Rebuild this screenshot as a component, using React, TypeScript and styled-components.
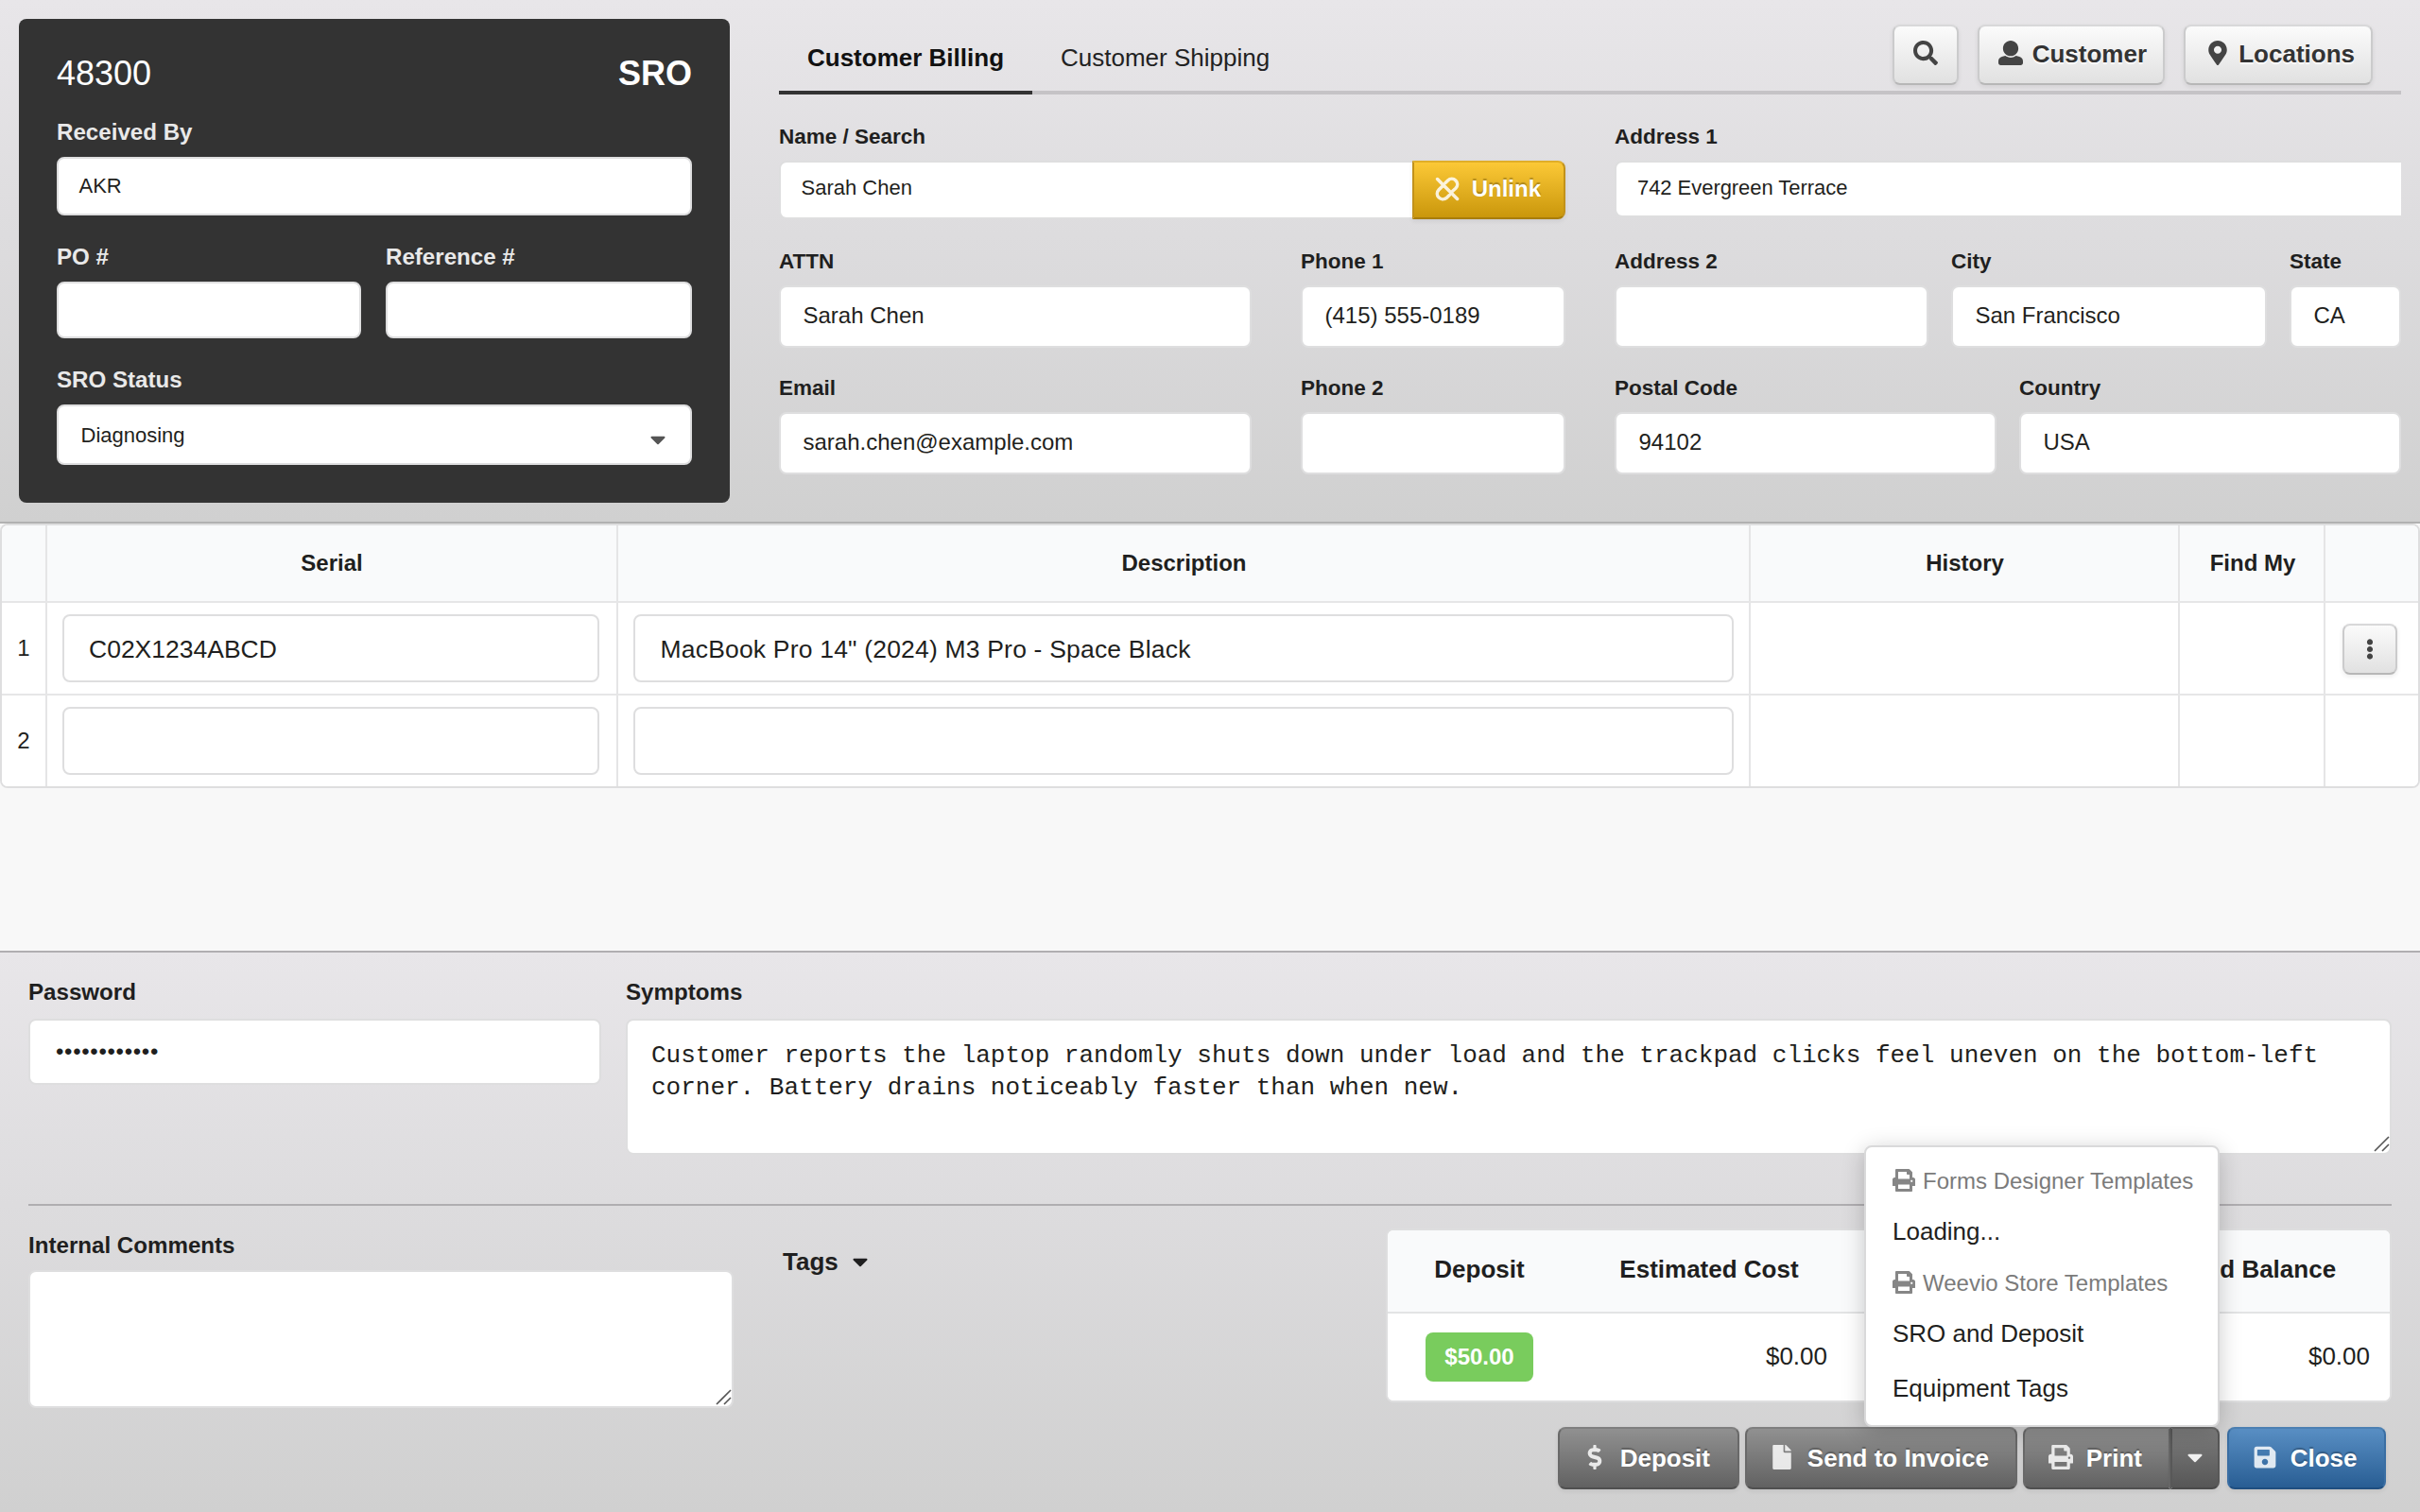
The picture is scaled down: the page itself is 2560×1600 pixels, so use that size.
import React from 'react';
import styled, { createGlobalStyle, css } from 'styled-components';
import {
  FaCaretDown,
  FaDollarSign,
  FaEllipsisV,
  FaFile,
  FaMapMarkerAlt,
  FaSave,
  FaSearch,
} from 'react-icons/fa';

const sans = `'Liberation Sans', Arial, Helvetica, sans-serif`;
const mono = `'Liberation Mono', 'Courier New', monospace`;
const line = '#dededf';
const ink = '#1f1f20';

const GlobalStyle = createGlobalStyle`
  *, *::before, *::after { box-sizing: border-box; }
  body {
    margin: 0;
    font-family: ${sans};
    color: ${ink};
    background: #f8f8f8;
  }
  svg { display: block; }
`;

const Page = styled.div`
  width: 2560px;
  height: 1600px;
  display: flex;
  flex-direction: column;
  overflow: hidden;
  background: #f8f8f8;
`;

/* ---------- shared form parts ---------- */

const FieldBox = styled.div<{ $grow?: number; $width?: number }>`
  display: flex;
  flex-direction: column;
  min-width: 0;
  ${(p) => (p.$width ? `flex: 0 0 ${p.$width}px;` : `flex: ${p.$grow ?? 1} 1 0;`)}
`;

const Label = styled.label<{ $size?: number; $light?: boolean; $gap?: number }>`
  font-size: ${(p) => p.$size ?? 24.14}px;
  line-height: 28px;
  font-weight: 700;
  white-space: nowrap;
  color: ${(p) => (p.$light ? '#e9e9e9' : ink)};
  margin-bottom: ${(p) => p.$gap ?? 12}px;
`;

const Input = styled.div<{
  $h: number;
  $size?: number;
  $pad?: number;
  $lift?: number;
  $sink?: number;
  $track?: number;
  $joined?: boolean;
}>`
  display: flex;
  align-items: center;
  flex: 1 1 auto;
  height: ${(p) => p.$h}px;
  max-height: ${(p) => p.$h}px;
  padding: ${(p) => p.$sink ?? 0}px ${(p) => p.$pad ?? 20}px ${(p) => p.$lift ?? 0}px;
  border: 2px solid ${line};
  border-radius: 8px;
  background: #fff;
  font-size: ${(p) => p.$size ?? 24}px;
  letter-spacing: ${(p) => p.$track ?? 0}px;
  white-space: nowrap;
  ${(p) =>
    p.$joined &&
    css`
      border-right: 0;
      border-radius: 8px 0 0 8px;
    `}
`;

const Row = styled.div<{ $gap: number; $top?: number }>`
  display: flex;
  gap: ${(p) => p.$gap}px;
  margin-top: ${(p) => p.$top ?? 0}px;
`;

/* ---------- buttons ---------- */

type Tone = 'light' | 'gray' | 'dark' | 'blue' | 'gold';

const tones: Record<Tone, ReturnType<typeof css>> = {
  light: css`
    color: #333;
    background-image: linear-gradient(#fcfcfc, #e0e0e0);
    border-color: #d8d8d9 #cbcbcc #b7b7b7;
    text-shadow: 0 2px 1px rgba(255, 255, 255, 0.9);
  `,
  gray: css`
    color: #fff;
    background-image: linear-gradient(#929292, #606060);
    border-color: #7f7f7f #696969 #505050;
    text-shadow: 0 -2px 1px rgba(0, 0, 0, 0.25);
  `,
  dark: css`
    color: #fff;
    background-image: linear-gradient(#7e7e7e, #555);
    border-color: #696969 #585858 #4a4a4a;
    text-shadow: 0 -2px 1px rgba(0, 0, 0, 0.25);
  `,
  blue: css`
    color: #fff;
    background-image: linear-gradient(#5a90c5, #275c92);
    border-color: #4c80b3 #3a6ea3 #1f4e80;
    text-shadow: 0 -2px 1px rgba(0, 0, 0, 0.25);
  `,
  gold: css`
    color: #fff;
    background-image: linear-gradient(#fdca38, #c8950a);
    border-color: #e0ae28 #c2921a #a87d0a;
    text-shadow: 0 -2px 1px rgba(0, 0, 0, 0.25);
  `,
};

const Button = styled.button<{
  $tone: Tone;
  $w: number;
  $h: number;
  $size?: number;
  $padRight?: number;
  $lift?: number;
  $center?: boolean;
  $radius?: string;
}>`
  display: flex;
  align-items: center;
  justify-content: ${(p) => (p.$center ? 'center' : 'flex-end')};
  flex: none;
  width: ${(p) => p.$w}px;
  height: ${(p) => p.$h}px;
  margin: 0;
  padding: 0 ${(p) => (p.$center ? 0 : (p.$padRight ?? 28))}px ${(p) => p.$lift ?? 0}px 0;
  border: 2px solid;
  border-radius: ${(p) => p.$radius ?? '8px'};
  background-origin: border-box;
  box-shadow: 0 2px 5px rgba(0, 0, 0, 0.08);
  font: 700 ${(p) => p.$size ?? 26}px / 1 ${sans};
  line-height: 32px;
  white-space: nowrap;
  ${(p) => tones[p.$tone]}
`;

const Glyph = styled.span<{ $box: number; $gap: number; $size?: number; $tint?: string; $drop?: number; $top?: number }>`
  display: flex;
  justify-content: center;
  width: ${(p) => p.$box}px;
  margin-right: ${(p) => p.$gap}px;
  padding: ${(p) => p.$top ?? 0}px 0 ${(p) => p.$drop ?? 3}px;
  font-size: ${(p) => p.$size ?? 26}px;
  color: ${(p) => p.$tint ?? 'rgba(255,255,255,.84)'};
`;

const UserIcon = () => (
  <svg width="1em" height="1em" viewBox="0 0 512 512" fill="currentColor">
    <path d="M256 0c88.366 0 160 71.634 160 160s-71.634 160-160 160S96 248.366 96 160 167.634 0 256 0zm183.283 333.821l-71.313-17.828c-74.923 53.89-165.738 41.864-223.94 0l-71.313 17.828C29.981 344.505 0 382.903 0 426.955V464c0 26.51 21.49 48 48 48h416c26.51 0 48-21.49 48-48v-37.045c0-44.052-29.981-82.45-72.717-93.134z" />
  </svg>
);

const PrintIcon = () => (
  <svg width="1em" height="1em" viewBox="0 0 512 512" fill="currentColor">
    <path d="M464 192h-16V81.941a24 24 0 0 0-7.029-16.97L383.029 7.029A24 24 0 0 0 366.059 0H88C74.745 0 64 10.745 64 24v168H48c-26.51 0-48 21.49-48 48v132c0 6.627 5.373 12 12 12h52v104c0 13.255 10.745 24 24 24h336c13.255 0 24-10.745 24-24V384h52c6.627 0 12-5.373 12-12V240c0-26.51-21.49-48-48-48zm-80 256H128v-96h256v96zM384 224H128V64h192v48c0 8.837 7.163 16 16 16h48v96zm48 72c-13.255 0-24-10.745-24-24s10.745-24 24-24 24 10.745 24 24-10.745 24-24 24z" />
  </svg>
);

const UnlinkIcon = () => (
  <svg
    width="26"
    height="28"
    viewBox="0 0 26 28"
    fill="none"
    stroke="currentColor"
    strokeWidth="3.5"
    strokeLinecap="round"
    strokeLinejoin="round"
  >
    <path d="M11 7.4 L13.6 4.9 C16 2.6 19.6 2.7 21.9 4.9 C24.3 7.3 24.3 10.8 21.9 13.2 L18.6 16.2 M15.2 20.6 L12.6 23.1 C10 25.4 6.4 25.3 4.1 23.1 C1.7 20.7 1.7 17.2 4.1 14.8 L7.4 11.6 M2.6 3.6 L23.6 24.4" />
  </svg>
);

/* ---------- header ---------- */

const Header = styled.header`
  flex: none;
  display: flex;
  height: 554px;
  padding: 20px 20px 0;
  border-bottom: 2px solid #b1b1b1;
  background: linear-gradient(#e8e6e9, #dddcde 45%, #d0d0d0);
`;

const OrderCard = styled.section`
  flex: none;
  width: 752px;
  height: 512px;
  padding: 36px 40px 0;
  border-radius: 8px;
  background: #333;
`;

const OrderTitle = styled.div`
  display: flex;
  justify-content: space-between;
  font-size: 36px;
  line-height: 44px;
  color: #fff;
`;

const Select = styled(Input)`
  justify-content: space-between;
`;

const Caret = styled(FaCaretDown)`
  width: 26px;
  height: 26px;
`;

const Customer = styled.section`
  flex: 1;
  margin-left: 52px;
`;

const TabBar = styled.nav`
  display: flex;
  align-items: flex-end;
  height: 80px;
  border-bottom: 4px solid #c5c3c6;
`;

const Tab = styled.a<{ $active?: boolean }>`
  display: flex;
  align-items: center;
  height: 74px;
  margin-bottom: -4px;
  padding: 0 30px;
  font-size: 26px;
  font-weight: ${(p) => (p.$active ? 700 : 400)};
  color: ${(p) => (p.$active ? '#111' : '#222')};
  border-bottom: 4px solid ${(p) => (p.$active ? '#333' : 'transparent')};
`;

const TabTools = styled.div`
  display: flex;
  gap: 20px;
  margin: 0 30px 6px auto;
`;

const CustomerForm = styled.div`
  display: grid;
  grid-template-columns: 832px 832px;
  column-gap: 52px;
`;

const Joined = styled.div<{ $h: number }>`
  display: flex;
  height: ${(p) => p.$h}px;
`;

/* ---------- equipment table ---------- */

const TableArea = styled.main`
  flex: 1;
`;

const Table = styled.div`
  border: 2px solid ${line};
  border-radius: 8px;
  background: #fff;
  overflow: hidden;
`;

const TableRow = styled.div<{ $head?: boolean }>`
  display: grid;
  grid-template-columns: 46px 604px 1198px 454px 154px 1fr;
  height: ${(p) => (p.$head ? 80 : 98)}px;
  background: ${(p) => (p.$head ? '#f9fafb' : '#fff')};
  font-size: 24px;
  font-weight: ${(p) => (p.$head ? 700 : 400)};
  border-top: ${(p) => (p.$head ? '0' : '2px solid #e6e6e7')};
`;

const Cell = styled.div<{ $padEnd?: number; $padStart?: number; $padTop?: number }>`
  display: flex;
  align-items: center;
  justify-content: center;
  border-left: 2px solid #e5e5e6;
  padding: ${(p) => p.$padTop ?? 0}px ${(p) => p.$padEnd ?? 0}px 0 ${(p) => p.$padStart ?? 0}px;

  &:first-child {
    border-left: 0;
  }
`;

const CellField = styled(Cell)`
  padding: 0 ${(p) => p.$padEnd ?? 17}px 0 16px;
`;

/* ---------- footer ---------- */

const Footer = styled.footer`
  flex: none;
  height: 594px;
  padding: 28px 30px 0;
  border-top: 2px solid #b0aeb1;
  background: linear-gradient(#e8e6e9, #dddcde 45%, #d0d0d0);
`;

const TextArea = styled.div<{ $h: number }>`
  position: relative;
  height: ${(p) => p.$h}px;
  padding: 20px 20px 20px 25px;
  border: 2px solid ${line};
  border-radius: 8px;
  background: #fff;
  font-family: ${mono};
  font-size: 26px;
  line-height: 34px;
`;

const GripSvg = styled.svg`
  position: absolute;
  right: 0;
  bottom: 0;
`;

const Grip = () => (
  <GripSvg width="18" height="19" viewBox="0 0 18 19" stroke="#555" strokeWidth="1.6">
    <path d="M2 17 L17 2 M10 17 L17 10" fill="none" />
  </GripSvg>
);

const Divider = styled.hr`
  height: 2px;
  margin: 52px 0 0;
  border: 0;
  background: #b0aeb1;
`;

const Comments = styled.div`
  display: flex;
  flex-direction: column;
  flex: 0 0 746px;
  padding-top: 28px;
`;

const Tags = styled.div`
  display: flex;
  align-items: center;
  align-self: flex-start;
  gap: 10px;
  padding-top: 43px;
  font-size: 26px;
  line-height: 32px;
  font-weight: 700;
`;

const Totals = styled.div`
  display: flex;
  flex-direction: column;
  width: 1064px;
  margin-left: auto;
  padding-top: 24px;
`;

const Summary = styled.div`
  height: 184px;
  border: 2px solid ${line};
  border-radius: 8px;
  background: #fff;
  overflow: hidden;
`;

const SummaryRow = styled.div<{ $head?: boolean }>`
  display: grid;
  grid-template-columns: 194px 292px 229px 345px;
  align-items: center;
  height: ${(p) => (p.$head ? 88 : 92)}px;
  padding-bottom: ${(p) => (p.$head ? 3 : 0)}px;
  border-bottom: ${(p) => (p.$head ? '2px solid #e3e4e5' : '0')};
  background: ${(p) => (p.$head ? '#f9fafb' : '#fff')};
  font-size: 26px;
  font-weight: ${(p) => (p.$head ? 700 : 400)};
  text-align: ${(p) => (p.$head ? 'center' : 'right')};
`;

const Amount = styled.div`
  padding: 0 21px 2px 0;
`;

const Badge = styled.span`
  display: flex;
  align-items: center;
  justify-content: center;
  justify-self: center;
  width: 114px;
  height: 52px;
  border-radius: 8px;
  background: #79cc5d;
  color: #fff;
  font-size: 24px;
  font-weight: 700;
`;

const Actions = styled.div`
  display: flex;
  justify-content: flex-end;
  gap: 6px;
  margin-top: 26px;
  padding-right: 6px;
`;

const PrintGroup = styled.div`
  position: relative;
  display: flex;
  margin-right: 2px;
`;

const Menu = styled.div`
  position: absolute;
  right: 0;
  bottom: 66px;
  width: 376px;
  height: 298px;
  padding: 14px 20px 10px 28px;
  border: 2px solid #d9d9da;
  border-radius: 8px;
  background: #fff;
  box-shadow: 0 4px 24px rgba(0, 0, 0, 0.2);
  font-size: 26px;
  white-space: nowrap;
`;

const MenuHeading = styled.div<{ $top?: number }>`
  display: flex;
  align-items: center;
  height: 44px;
  margin: ${(p) => p.$top ?? 0}px 0 2px;
  font-size: 24px;
  color: #7b7b7b;
`;

const MenuItem = styled.div`
  height: 58px;
  line-height: 58px;
`;

/* ---------- data ---------- */

const equipment = [
  { serial: 'C02X1234ABCD', description: 'MacBook Pro 14" (2024) M3 Pro - Space Black', menu: true },
  { serial: '', description: '', menu: false },
];

interface FieldProps {
  label: string;
  value?: string;
  width?: number;
  grow?: number;
}

const BillingField = ({ label, value, width, grow }: FieldProps) => (
  <FieldBox $width={width} $grow={grow}>
    <Label $size={22.5} $gap={11}>
      {label}
    </Label>
    <Input $h={66} $pad={23.5} $lift={2}>
      {value}
    </Input>
  </FieldBox>
);

export default function App() {
  return (
    <Page>
      <GlobalStyle />
      <Header>
        <OrderCard>
          <OrderTitle>
            <span>48300</span>
            <b>SRO</b>
          </OrderTitle>
          <Row $gap={26} $top={26}>
            <FieldBox>
              <Label $light>Received By</Label>
              <Input $h={62} $size={22} $pad={21.5}>
                AKR
              </Input>
            </FieldBox>
          </Row>
          <Row $gap={26} $top={30}>
            <FieldBox $width={322}>
              <Label $light>PO #</Label>
              <Input $h={60} />
            </FieldBox>
            <FieldBox>
              <Label $light>Reference #</Label>
              <Input $h={60} />
            </FieldBox>
          </Row>
          <Row $gap={26} $top={30}>
            <FieldBox>
              <Label $light>SRO Status</Label>
              <Select $h={64} $size={22} $pad={23.5} $sink={1}>
                Diagnosing
                <Glyph as="i" $box={22} $gap={0} $tint="#555" $drop={0} $top={8}>
                  <Caret />
                </Glyph>
              </Select>
            </FieldBox>
          </Row>
        </OrderCard>

        <Customer>
          <TabBar>
            <Tab $active>Customer Billing</Tab>
            <Tab>Customer Shipping</Tab>
            <TabTools>
              <Button $tone="light" $w={70} $h={64} $center>
                <Glyph $box={28} $gap={0} $tint="#444" $drop={4}>
                  <FaSearch />
                </Glyph>
              </Button>
              <Button $tone="light" $w={198} $h={64} $padRight={17} $lift={2}>
                <Glyph $box={30} $gap={8} $tint="#444" $drop={2}>
                  <UserIcon />
                </Glyph>
                Customer
              </Button>
              <Button $tone="light" $w={200} $h={64} $padRight={17} $lift={2}>
                <Glyph $box={30} $gap={7} $tint="#444" $drop={2}>
                  <FaMapMarkerAlt />
                </Glyph>
                Locations
              </Button>
            </TabTools>
          </TabBar>

          <CustomerForm>
            <div>
              <Row $gap={0} $top={31}>
                <FieldBox>
                  <Label $size={22.5} $gap={11}>
                    Name / Search
                  </Label>
                  <Joined $h={62}>
                    <Input $h={62} $size={22} $pad={21.5} $lift={4} $joined>
                      Sarah Chen
                    </Input>
                    <Button $tone="gold" $w={162} $h={62} $size={24} $padRight={24} $lift={2} $radius="0 8px 8px 0">
                      <Glyph $box={27} $gap={12} $drop={0}>
                        <UnlinkIcon />
                      </Glyph>
                      Unlink
                    </Button>
                  </Joined>
                </FieldBox>
              </Row>
              <Row $gap={52} $top={31}>
                <BillingField label="ATTN" value="Sarah Chen" />
                <BillingField label="Phone 1" value="(415) 555-0189" width={280} />
              </Row>
              <Row $gap={52} $top={29}>
                <BillingField label="Email" value="sarah.chen@example.com" />
                <BillingField label="Phone 2" width={280} />
              </Row>
            </div>
            <div>
              <Row $gap={0} $top={31}>
                <FieldBox>
                  <Label $size={22.5} $gap={11}>
                    Address 1
                  </Label>
                  <Joined $h={62}>
                    <Input $h={60} $size={22} $pad={22} $lift={2} $track={-0.05} $joined>
                      742 Evergreen Terrace
                    </Input>
                  </Joined>
                </FieldBox>
              </Row>
              <Row $gap={24} $top={31}>
                <BillingField label="Address 2" width={332} />
                <BillingField label="City" value="San Francisco" />
                <BillingField label="State" value="CA" width={118} />
              </Row>
              <Row $gap={24} $top={29}>
                <BillingField label="Postal Code" value="94102" />
                <BillingField label="Country" value="USA" />
              </Row>
            </div>
          </CustomerForm>
        </Customer>
      </Header>

      <TableArea>
        <Table>
          <TableRow $head>
            <Cell />
            <Cell>Serial</Cell>
            <Cell $padStart={1}>Description</Cell>
            <Cell $padStart={1}>History</Cell>
            <Cell $padStart={2}>Find My</Cell>
            <Cell />
          </TableRow>
          {equipment.map((item, i) => (
            <TableRow key={i}>
              <Cell>{i + 1}</Cell>
              <CellField $padEnd={18}>
                <Input $h={72} $size={26.5} $pad={26} $sink={2}>
                  {item.serial}
                </Input>
              </CellField>
              <CellField $padEnd={16}>
                <Input $h={72} $size={26.5} $pad={26.5} $sink={2} $track={0.19}>
                  {item.description}
                </Input>
              </CellField>
              <Cell />
              <Cell />
              <Cell $padEnd={4} $padTop={2}>
                {item.menu && (
                  <Button $tone="light" $w={58} $h={54} $center>
                    <Glyph $box={26} $gap={0} $tint="#444" $size={22} $drop={0}>
                      <FaEllipsisV />
                    </Glyph>
                  </Button>
                )}
              </Cell>
            </TableRow>
          ))}
        </Table>
      </TableArea>

      <Footer>
        <Row $gap={26}>
          <FieldBox $width={606}>
            <Label $gap={14}>Password</Label>
            <Input $h={70} $size={24} $pad={27} $lift={1} $track={0.68}>
              ••••••••••••
            </Input>
          </FieldBox>
          <FieldBox>
            <Label $gap={14}>Symptoms</Label>
            <TextArea $h={144}>
              Customer reports the laptop randomly shuts down under load and the trackpad clicks feel uneven on the
              bottom-left corner. Battery drains noticeably faster than when new.
              <Grip />
            </TextArea>
          </FieldBox>
        </Row>
        <Divider />
        <Row $gap={52}>
          <Comments>
            <Label>Internal Comments</Label>
            <TextArea $h={146}>
              <Grip />
            </TextArea>
          </Comments>
          <Tags>
            Tags
            <Caret />
          </Tags>
          <Totals>
            <Summary>
              <SummaryRow $head>
                <div>Deposit</div>
                <div>Estimated Cost</div>
                <div />
                <div>Estimated Balance</div>
              </SummaryRow>
              <SummaryRow>
                <Badge>$50.00</Badge>
                <Amount>$0.00</Amount>
                <div />
                <Amount>$0.00</Amount>
              </SummaryRow>
            </Summary>
            <Actions>
              <Button $tone="gray" $w={192} $h={66} $padRight={29}>
                <Glyph $box={31} $gap={11}>
                  <FaDollarSign />
                </Glyph>
                Deposit
              </Button>
              <Button $tone="gray" $w={288} $h={66}>
                <Glyph $box={31} $gap={11}>
                  <FaFile />
                </Glyph>
                Send to Invoice
              </Button>
              <PrintGroup>
                <Button $tone="gray" $w={156} $h={66} $radius="8px 0 0 8px">
                  <Glyph $box={31} $gap={11}>
                    <PrintIcon />
                  </Glyph>
                  Print
                </Button>
                <Button $tone="dark" $w={52} $h={66} $center $radius="0 8px 8px 0">
                  <Glyph $box={26} $gap={0} $drop={3} $tint="#f0f0f0">
                    <Caret />
                  </Glyph>
                </Button>
                <Menu>
                  <MenuHeading>
                    <Glyph $box={24} $gap={8} $size={24} $tint="#868686" $drop={2}>
                      <PrintIcon />
                    </Glyph>
                    Forms Designer Templates
                  </MenuHeading>
                  <MenuItem>Loading...</MenuItem>
                  <MenuHeading $top={4}>
                    <Glyph $box={24} $gap={8} $size={24} $tint="#868686" $drop={2}>
                      <PrintIcon />
                    </Glyph>
                    Weevio Store Templates
                  </MenuHeading>
                  <MenuItem>SRO and Deposit</MenuItem>
                  <MenuItem>Equipment Tags</MenuItem>
                </Menu>
              </PrintGroup>
              <Button $tone="blue" $w={168} $h={66} $padRight={28.5}>
                <Glyph $box={31} $gap={11}>
                  <FaSave />
                </Glyph>
                Close
              </Button>
            </Actions>
          </Totals>
        </Row>
      </Footer>
    </Page>
  );
}
